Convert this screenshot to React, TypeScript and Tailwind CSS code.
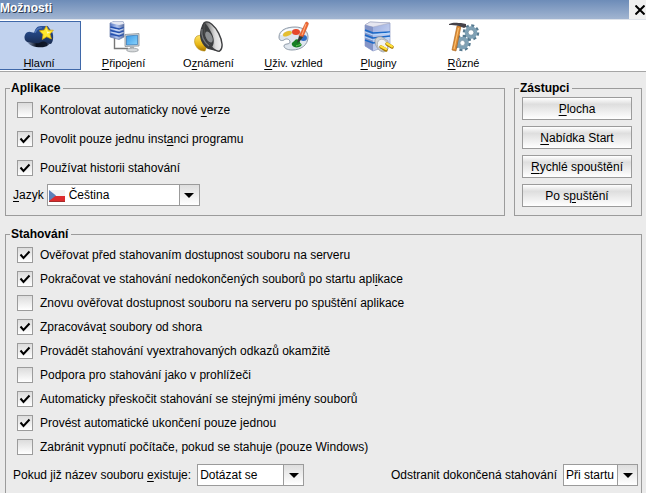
import type { ReactNode } from "react";

// Renders a label with its mnemonic letter (marked by "&") underlined
function Mnemonic({ text }: { text: string }) {
  const i = text.indexOf("&");
  if (i < 0) return <>{text}</>;
  return (
    <>
      {text.slice(0, i)}
      <span className="underline underline-offset-2">{text[i + 1]}</span>
      {text.slice(i + 2)}
    </>
  );
}

function MainIcon() {
  return (
    <svg className="w-8 h-8" viewBox="0 0 32 32" aria-hidden="true">
      <defs>
        <linearGradient id="cloud" x1="0" y1="0" x2="0" y2="1">
          <stop offset="0" stopColor="#2c559c" />
          <stop offset="0.6" stopColor="#203d72" />
          <stop offset="1" stopColor="#1a2c50" />
        </linearGradient>
        <linearGradient id="cloudBase" x1="0" y1="0" x2="1" y2="0">
          <stop offset="0" stopColor="#8fa3c9" />
          <stop offset="0.4" stopColor="#0b1220" />
          <stop offset="0.8" stopColor="#10192c" />
          <stop offset="1" stopColor="#8093ba" />
        </linearGradient>
      </defs>
      <path d="M3 19h26c-1 4-5 7-11 7-7 0-13-2-15-7z" fill="url(#cloudBase)" />
      <path
        d="M1 16c0-3 2-6 5-6 2 0 3 1 5 1 1-4 3-7 7-7h7l5 7c1 3 1 8-1 11-1 1-2 1-3 0-2 0-3-2-5-2-3 0-4 2-8 2-3 0-5-1-7-1-3 0-5-2-5-5z"
        fill="url(#cloud)"
      />
      <path d="M12 11c1-3 3-5 7-5" fill="none" stroke="#4d74b8" strokeWidth="1.500" />
      <path
        d="M23.500 4l2.300 4.400 5 .1-3.500 4 1.500 5-4.800-2.200-4.600 2.700.8-5.200-3.800-3.700 5-.8z"
        fill="#ffe92e"
        stroke="#d9a70a"
        strokeWidth="0.800"
      />
      <path d="M23.500 7l1.400 3.200 3 .2-3.400 1.600z" fill="#fffbb5" />
    </svg>
  );
}

function ConnectionIcon() {
  return (
    <svg className="w-8 h-8" viewBox="0 0 32 32" aria-hidden="true">
      <defs>
        <linearGradient id="srv" x1="0" y1="0" x2="1" y2="0">
          <stop offset="0" stopColor="#5272c0" />
          <stop offset="0.5" stopColor="#b4c6ee" />
          <stop offset="1" stopColor="#5b6f9f" />
        </linearGradient>
        <linearGradient id="screen" x1="0" y1="0" x2="1" y2="1">
          <stop offset="0" stopColor="#3b9be8" />
          <stop offset="1" stopColor="#8ad3fb" />
        </linearGradient>
      </defs>
      <path d="M6.500 17v10.500H20" fill="none" stroke="#777" strokeWidth="1.400" />
      <path d="M2 2l4-1.500h9L16 3v13l-5 2.500L2 16z" fill="url(#srv)" stroke="#6578a8" strokeWidth="0.700" />
      <path d="M2 2l4-1.500h9L16 3l-5 1z" fill="#e5e8f2" />
      <path d="M2.500 6l8.500 2 4.500-1.500M2.500 9.500l8.500 2 4.500-1.500M2.500 13l8.500 2 4.500-1.500" fill="none" stroke="#234fae" strokeWidth="1.300" />
      <path d="M2.500 7.500l8.500 2 4.500-1.500M2.500 11l8.500 2 4.500-1.500" fill="none" stroke="#d8e7ff" strokeWidth="0.800" />
      <path d="M17 13.500l14-1v12.500l-14 .5z" fill="#d2d6d9" stroke="#8a9298" strokeWidth="0.800" />
      <path d="M18.500 15l11-.8v9.300l-11 .5z" fill="url(#screen)" stroke="#2369ad" strokeWidth="0.600" />
      <path d="M22 25.500h4V28h-4z" fill="#aeb4b8" />
      <ellipse cx="24.500" cy="29" rx="6" ry="1.900" fill="#d5d8da" stroke="#8e9498" strokeWidth="0.700" />
    </svg>
  );
}

function SpeakerIcon() {
  return (
    <svg className="w-8 h-8" viewBox="0 0 32 32" aria-hidden="true">
      <defs>
        <linearGradient id="gold" x1="0" y1="0" x2="0" y2="1">
          <stop offset="0" stopColor="#ffe66b" />
          <stop offset="0.6" stopColor="#e9b715" />
          <stop offset="1" stopColor="#a67500" />
        </linearGradient>
        <linearGradient id="cone" x1="0" y1="0" x2="1" y2="1">
          <stop offset="0.200" stopColor="#555" />
          <stop offset="0.600" stopColor="#ddd" />
          <stop offset="1" stopColor="#fff" />
        </linearGradient>
      </defs>
      <path d="M4 15c-3 2-3 7-1 10 2 4 6 5 9 5l2-5-6-11z" fill="url(#gold)" stroke="#b58a11" strokeWidth="0.600" />
      <path d="M11 1C8 5 7 10 7 14c0 6 4 12 8 14l12 3z" fill="#3a3b3d" />
      <ellipse cx="19.500" cy="15.500" rx="7" ry="16" transform="rotate(-27 19.500 15.500)" fill="url(#cone)" stroke="#3d3e40" strokeWidth="1.400" />
      <path d="M12 2c-2 7 1 17 7 24 3-4 2-10-1-15-2-4-4-7-6-9z" fill="#3b3d3f" />
      <ellipse cx="16" cy="16" rx="3" ry="6" transform="rotate(-27 16 16)" fill="#8b8e91" />
      <path d="M9 8c-1 7 2 13 7 17" fill="none" stroke="#75777a" strokeWidth="1.200" />
    </svg>
  );
}

function PaletteIcon() {
  return (
    <svg className="w-8 h-8" viewBox="0 0 32 32" aria-hidden="true">
      <path
        d="M1 16C1 9 9 6 17 6c8 0 13 4 13 10 0 8-7 13-16 13-5 0-8-2-8-4 0-3 6-1 6-4 0-3-4-4-6-2-2 1-5 1-5-3z"
        fill="#dfe6ee"
        stroke="#8e9aa8"
        strokeWidth="1"
      />
      <path d="M3 14c2-4 7-6 13-6 5 0 9 2 11 5" fill="none" stroke="#fff" strokeWidth="1.500" />
      <path d="M5 14c0-2 3-4 7-4 3 0 2 3 0 4s-7 3-7 0z" fill="#e5bf32" />
      <ellipse cx="18" cy="11" rx="4" ry="3" fill="#e6482b" />
      <ellipse cx="25.500" cy="17" rx="3.500" ry="3" fill="#316ec5" />
      <path d="M14 24c-1-3 2-3 3-5 2-2 5 0 5 2s3 2 1 4c-2 2-8 2-9-1z" fill="#177f25" />
      <path d="M18 25c2-1 4-1 5-2" stroke="#6ad05a" strokeWidth="1" />
      <path d="M28 1c2 0 3 1 2 3l-5 12-4-1z" fill="#f26832" stroke="#c44a20" strokeWidth="0.500" />
      <path d="M28 3l-4 11" stroke="#ffb083" strokeWidth="1" />
      <path d="M21 15l4 1-3 4-3 2z" fill="#313b31" />
    </svg>
  );
}

function PluginIcon() {
  return (
    <svg className="w-8 h-8" viewBox="0 0 32 32" aria-hidden="true">
      <defs>
        <linearGradient id="box" x1="0" y1="0" x2="1" y2="1">
          <stop offset="0" stopColor="#8c9fd6" />
          <stop offset="1" stopColor="#dce5fb" />
        </linearGradient>
      </defs>
      <path d="M2 4l5-3 20 1v22l-17 6-8-5z" fill="url(#box)" stroke="#8f9cc5" strokeWidth="0.700" />
      <path d="M2 4l5-3 20 1-17 4z" fill="#e6e6f0" stroke="#a6a9bc" strokeWidth="0.500" />
      <path d="M2 4l8 2v24l-8-5z" fill="#8494c6" />
      <path d="M2 9l8 3 17-1M2 14l8 3 17-2" fill="none" stroke="#1969c8" strokeWidth="1.600" />
      <path d="M2 11l8 3 17-2M2 16l8 3 17-2" fill="none" stroke="#b6dcff" strokeWidth="1" />
      <path d="M2 19l8 3 6-1" fill="none" stroke="#1969c8" strokeWidth="1.500" />
      <path d="M12 20c0-3 3-5 7-4l6 4v8l-4 3c-5 0-9-6-9-11z" fill="#ced1d5" stroke="#92979e" strokeWidth="0.700" />
      <ellipse cx="19.500" cy="24" rx="5" ry="6" transform="rotate(-25 19.500 24)" fill="#f1f2f3" stroke="#a4a8ad" strokeWidth="0.700" />
      <path d="M18 26l5 3M24 23l5 3" stroke="#a87800" strokeWidth="3.500" strokeLinecap="round" />
      <path d="M18 25.500l5 2.500M24 22.500l5 3" stroke="#ffe039" strokeWidth="2.200" strokeLinecap="round" />
    </svg>
  );
}

function ToolsIcon() {
  return (
    <svg className="w-8 h-8" viewBox="0 0 32 32" aria-hidden="true">
      {/* dashed rings give the gear teeth */}
      <circle cx="23" cy="11.500" r="7" fill="none" stroke="#567a90" strokeWidth="2.500" strokeDasharray="3 2.500" />
      <circle cx="23" cy="11.500" r="4.500" fill="#fff" stroke="#7fa1b5" strokeWidth="3.600" />
      <circle cx="23" cy="11.500" r="2.800" fill="#fff" stroke="#4b7087" strokeWidth="0.600" />
      <circle cx="14.500" cy="22" r="7" fill="none" stroke="#567a90" strokeWidth="2.500" strokeDasharray="3 2.500" />
      <circle cx="14.500" cy="22" r="4.500" fill="#fff" stroke="#7fa1b5" strokeWidth="3.600" />
      <circle cx="14.500" cy="22" r="2.600" fill="#fff" stroke="#4b7087" strokeWidth="0.600" />
      <path d="M9 5h4L8 30l-4-1z" fill="#de8d36" stroke="#a55f1b" strokeWidth="0.600" />
      <path d="M10.500 7L6 28" stroke="#ffc676" strokeWidth="1" />
      <path d="M1 3c4-2 9-1 12-1l5 1v3l-2 1-5-2C7 4 5 4 1 4z" fill="#454249" />
    </svg>
  );
}

function CloseIcon() {
  return (
    <svg className="w-2.5 h-2.5" viewBox="0 0 10 10" aria-hidden="true">
      <path d="M0.500 0.500l9 9M9.500 0.500l-9 9" stroke="#000" strokeWidth="2" />
    </svg>
  );
}

function CzechFlag() {
  return (
    <svg
      className="pointer-events-none absolute left-px top-[5px] w-4 h-3"
      viewBox="0 0 16 12"
      aria-hidden="true"
    >
      <path d="M0 0h16v6H0z" fill="#f2f2f2" />
      <path d="M0 6h16v5H0z" fill="#dc2b2d" />
      <path d="M0 0l7 5.500L0 11z" fill="#5c7fb8" />
      <path d="M0 11.500h16" stroke="#a52c2c" />
    </svg>
  );
}

const tabs: { label: string; icon: ReactNode }[] = [
  { label: "&Hlavní", icon: <MainIcon /> },
  { label: "&Připojení", icon: <ConnectionIcon /> },
  { label: "O&známení", icon: <SpeakerIcon /> },
  { label: "&Uživ. vzhled", icon: <PaletteIcon /> },
  { label: "&Pluginy", icon: <PluginIcon /> },
  { label: "&Různé", icon: <ToolsIcon /> },
];

const appOptions = [
  { label: "Kontrolovat automaticky nové &verze", checked: false },
  { label: "Povolit pouze jednu inst&anci programu", checked: true },
  { label: "Používat historii stahování", checked: true },
];

const downloadOptions = [
  { label: "Ověřovat před stahovaním dostupnost souboru na serveru", checked: true },
  { label: "Pokračovat ve stahování nedokončených souborů po startu apl&ikace", checked: true },
  { label: "Znovu ověřovat dostupnost souboru na serveru po spuštění aplikace", checked: false },
  { label: "Zpracováva&t soubory od shora", checked: true },
  { label: "Provádět stahování vyextrahovaných odkazů okamžitě", checked: true },
  { label: "Podpora pro stahování jako v prohlížeči", checked: false },
  { label: "Automaticky přeskočit stahování se stejnými jmény souborů", checked: true },
  { label: "Provést automatické ukončení pouze jednou", checked: true },
  { label: "Zabránit vypnutí počítače, pokud se stahuje (pouze Windows)", checked: false },
];

const shortcuts = ["&Plocha", "&Nabídka Start", "&Rychlé spouštění", "Po s&puštění"];

function CheckRow({ label, checked }: { label: string; checked: boolean }) {
  return (
    <label className="flex items-center gap-[7px]">
      <span className="relative flex w-4 h-4">
        <input
          type="checkbox"
          defaultChecked={checked}
          className="peer w-4 h-4 appearance-none border border-[#9b9b9b] bg-linear-to-b from-[#dcdcdc] to-white"
        />
        <svg
          className="pointer-events-none absolute inset-0 hidden w-4 h-4 peer-checked:block"
          viewBox="0 0 16 16"
          aria-hidden="true"
        >
          <path d="M3.500 7.500l3 3.500 6-6.500" fill="none" stroke="#000" strokeWidth="2" />
        </svg>
      </span>
      <span>
        <Mnemonic text={label} />
      </span>
    </label>
  );
}

function Combo({
  id,
  options,
  className,
  flag,
}: {
  id: string;
  options: string[];
  className: string;
  flag?: boolean;
}) {
  return (
    <div className={`relative flex h-[22px] border border-[#9b9b9b] bg-white ${className}`}>
      {flag && <CzechFlag />}
      <select
        id={id}
        className={`w-full appearance-none bg-transparent pr-5 outline-none ${flag ? "pl-[21px]" : "pl-0.5"}`}
      >
        {options.map((o) => (
          <option key={o}>{o}</option>
        ))}
      </select>
      <span className="pointer-events-none absolute inset-y-0 right-0 flex w-5 items-center justify-center border-l border-[#9b9b9b] bg-linear-to-b from-[#dedede] to-white">
        <svg className="w-2.5 h-[5px]" viewBox="0 0 10 5" aria-hidden="true">
          <path d="M0 0h10L5 5z" />
        </svg>
      </span>
    </div>
  );
}

function Group({
  title,
  className,
  children,
}: {
  title: string;
  className: string;
  children: ReactNode;
}) {
  return (
    <fieldset className={`min-w-0 border border-[#9b9b9b] ${className}`}>
      <legend className="ml-1 pl-px pr-[3px] font-bold leading-4">{title}</legend>
      {children}
    </fieldset>
  );
}

export default function App() {
  return (
    <div className="flex h-screen flex-col overflow-hidden bg-[#ebebeb] font-['Liberation_Sans',Arial,sans-serif] text-[12px] leading-4 text-black">
      <header className="flex h-5 shrink-0 items-stretch border-b border-[#dfe3ea] bg-linear-to-b from-[#6d8cb8] to-[#a2b5d1]">
        <h1 className="flex-1 font-bold text-white [text-shadow:1px_1px_0_#2c3a50]">Možnosti</h1>
        <button aria-label="Zavřít" className="flex w-[17px] items-center justify-center bg-[#f0f0f0] pl-1">
          <CloseIcon />
        </button>
      </header>

      <nav className="flex h-[52px] shrink-0 border-b border-[#a5a5a5] bg-white">
        {tabs.map((tab, i) => (
          <button
            key={tab.label}
            className={`flex flex-col items-center gap-1 text-[11px] leading-3 ${
              i === 0
                ? "my-px w-[81px] border border-l-0 border-[#3f68a9] bg-[#c1d2ee] pr-0.5"
                : "w-[85px] pt-px"
            }`}
          >
            {tab.icon}
            <span>
              <Mnemonic text={tab.label} />
            </span>
          </button>
        ))}
      </nav>

      <main className="flex flex-1 flex-col gap-2.5 pl-[5px] pr-1 pt-2">
        <div className="flex gap-[9px]">
          <Group title="Aplikace" className="flex-1 pb-[9px]">
            <div className="grid auto-rows-[28px] gap-px pl-[11px]">
              {appOptions.map((o) => (
                <CheckRow key={o.label} {...o} />
              ))}
            </div>
            <div className="mt-0.5 flex items-center gap-[3px] pl-[7px]">
              <label htmlFor="language">
                <Mnemonic text="&Jazyk" />
              </label>
              <Combo id="language" options={["Čeština", "English"]} className="w-[153px]" flag />
            </div>
          </Group>

          <Group title="Zástupci" className="w-32">
            <div className="flex flex-col gap-1.5 pl-[7px] pr-[9px] pt-px">
              {shortcuts.map((s) => (
                <button
                  key={s}
                  className="h-[23px] whitespace-nowrap border border-[#9b9b9b] bg-linear-to-b from-white via-[#dedede] via-30% to-white"
                >
                  <Mnemonic text={s} />
                </button>
              ))}
            </div>
          </Group>
        </div>

        <Group title="Stahování" className="flex-1 border-b-0">
          <div className="grid auto-rows-[24px] pl-[11px] pt-px">
            {downloadOptions.map((o) => (
              <CheckRow key={o.label} {...o} />
            ))}
          </div>
          <div className="mt-[5px] flex items-center gap-1.5 pl-[7px] pr-[3px]">
            <label htmlFor="exists">
              <Mnemonic text="Pokud již název souboru &existuje:" />
            </label>
            <Combo id="exists" options={["Dotázat se", "Přepsat", "Přeskočit"]} className="w-[107px]" />
            <label htmlFor="remove" className="ml-auto">
              Odstranit dokončená stahování
            </label>
            <Combo id="remove" options={["Při startu", "Nikdy"]} className="w-[75px]" />
          </div>
        </Group>
      </main>
    </div>
  );
}
